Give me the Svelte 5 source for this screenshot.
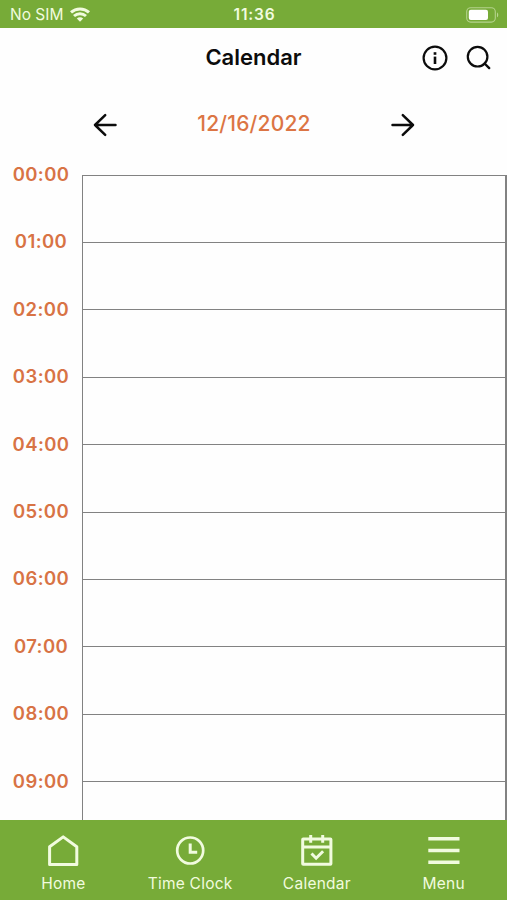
<script lang="ts">
	const date = '12/16/2022';
	const hours = Array.from({ length: 10 }, (_, i) => `${String(i).padStart(2, '0')}:00`);
</script>

<div class="screen">
	<div class="status-bar">
		<div class="carrier">
			<span class="carrier-name">No SIM</span>
			<svg class="wifi" width="20" height="15" viewBox="0 0 20 15" fill="none" stroke="currentColor" stroke-width="3">
				<path d="M1 5.4C6 .8 14 .8 19 5.4" />
				<path d="M4 9c3.500-3.100 8.500-3.100 12 0" />
				<path d="M6.800 11.600c1.900-1.700 4.500-1.700 6.400 0L10 14.800Z" fill="currentColor" stroke="none" />
			</svg>
		</div>
		<span class="clock">11:36</span>
		<svg class="battery" width="33" height="16" viewBox="0 0 33 16">
			<rect x=".7" y=".7" width="28.6" height="14.4" rx="4" fill="none" stroke="currentColor" stroke-opacity=".5" stroke-width="1.1" />
			<rect x="2.8" y="2.7" width="19.2" height="10.4" rx="2" fill="#fff" />
			<path d="M31 5.5c1.6.6 1.6 4.2 0 4.8Z" fill="currentColor" fill-opacity=".55" />
		</svg>
	</div>

	<header class="header">
		<span></span>
		<h1>Calendar</h1>
		<div class="actions">
			<button type="button" aria-label="Info">
				<svg width="26" height="26" viewBox="0 0 26 26" fill="none" stroke="currentColor" stroke-width="2.2">
					<circle cx="13" cy="13" r="11.4" />
					<path d="M13 11.6v7.4" stroke-width="2.6" />
					<path d="M13 7.2v2.6" stroke-width="2.7" />
				</svg>
			</button>
			<button type="button" aria-label="Search">
				<svg width="26" height="26" viewBox="0 0 26 26" fill="none" stroke="currentColor" stroke-width="2.2" stroke-linecap="round">
					<circle cx="11.6" cy="11.7" r="9.8" />
					<path d="m18.6 18.5 4.6 4.6" stroke-width="2.4" />
				</svg>
			</button>
		</div>
	</header>

	<div class="date-nav">
		<button type="button" aria-label="Previous day">
			<svg width="24" height="24" viewBox="0 0 24 24" fill="none" stroke="currentColor" stroke-width="2.5" stroke-linecap="round" stroke-linejoin="round">
				<path d="M22.5 12H2M12.200 2.200 2 12l10.200 9.800" />
			</svg>
		</button>
		<span class="date">{date}</span>
		<button type="button" aria-label="Next day">
			<svg width="24" height="24" viewBox="0 0 24 24" fill="none" stroke="currentColor" stroke-width="2.5" stroke-linecap="round" stroke-linejoin="round">
				<path d="M1.500 12H22M11.800 2.200 22 12l-10.200 9.800" />
			</svg>
		</button>
	</div>

	<main class="day">
		{#each hours as hour}
			<div class="row">
				<span class="hour">{hour}</span>
				<div class="slot"></div>
			</div>
		{/each}
	</main>

	<nav class="tabs">
		<a href="#home">
			<svg width="34" height="34" viewBox="0 0 34 34" fill="none" stroke="currentColor" stroke-width="3">
				<path d="M3.600 30.500V12.700L17.200 2.900l13.600 9.800v17.800Z" stroke-linejoin="round" />
			</svg>
			<span>Home</span>
		</a>
		<a href="#time-clock">
			<svg width="34" height="34" viewBox="0 0 34 34" fill="none" stroke="currentColor" stroke-width="2.7">
				<circle cx="17.2" cy="16.5" r="13" />
				<path d="M17.200 9.500v8.700h7" stroke-width="3" />
			</svg>
			<span>Time Clock</span>
		</a>
		<a href="#calendar">
			<svg width="34" height="34" viewBox="0 0 34 34" fill="none" stroke="currentColor" stroke-width="3">
				<rect x="2.700" y="5" width="28.200" height="25.300" rx=".5" />
				<path d="M2.700 13h28.200M10.700 1v7.800M22.700 1v7.800" />
				<path d="m11.500 19.500 4.600 4.700 7-6.900" />
			</svg>
			<span>Calendar</span>
		</a>
		<a href="#menu">
			<svg width="34" height="34" viewBox="0 0 34 34" fill="none" stroke="currentColor" stroke-width="3.4">
				<path d="M1.300 4.700h31.200M1.300 16.500h31.200M1.300 28.200h31.200" />
			</svg>
			<span>Menu</span>
		</a>
	</nav>
</div>

<style>
	:global(body) {
		margin: 0;
		background: #fff;
	}

	.screen {
		display: flex;
		flex-direction: column;
		width: 507px;
		height: 900px;
		overflow: hidden;
		font-family: Inter, 'Liberation Sans', sans-serif;
		color: #0c0c0c;
		background: #fefefe;
	}

	.status-bar {
		display: grid;
		grid-template-columns: 1fr auto 1fr;
		align-items: center;
		flex: none;
		height: 28px;
		padding: 0 8px 0 10px;
		box-sizing: border-box;
		background: #77ab38;
		color: #f1fbdf;
	}

	.carrier {
		display: flex;
		align-items: center;
		gap: 7px;
	}

	.carrier-name {
		padding-top: 1px;
		font-size: 15.5px;
		line-height: 28px;
	}

	.clock {
		padding-top: 1px;
		font-size: 15.5px;
		font-weight: 600;
		line-height: 28px;
		letter-spacing: 0.8px;
	}

	.battery {
		justify-self: end;
	}

	.header {
		display: grid;
		grid-template-columns: 1fr auto 1fr;
		align-items: center;
		flex: none;
		height: 60px;
		padding: 0 15px;
		box-sizing: border-box;
	}

	h1 {
		margin: -2px 0 0;
		font-size: 22px;
		font-weight: 600;
		line-height: 28px;
	}

	.actions {
		display: flex;
		justify-content: flex-end;
		gap: 18px;
	}

	button {
		display: flex;
		padding: 0;
		border: 0;
		background: none;
		color: inherit;
		cursor: pointer;
	}

	.date-nav {
		display: flex;
		align-items: center;
		justify-content: space-between;
		flex: none;
		height: 74px;
		padding: 0 92px 0 93px;
		box-sizing: border-box;
	}

	.date {
		margin-top: -2px;
		font-size: 21px;
		font-weight: 500;
		line-height: 26px;
		letter-spacing: 0.2px;
		color: #dc7544;
	}

	.day {
		flex: 1;
		min-height: 0;
		overflow: hidden;
		padding-top: 12.7px;
	}

	.row {
		display: flex;
		height: 67.4px;
	}

	.hour {
		width: 82px;
		flex: none;
		margin-top: -12.6px;
		font-size: 18.5px;
		font-weight: 600;
		line-height: 24px;
		letter-spacing: 0.4px;
		text-align: center;
		color: #d87345;
	}

	.slot {
		flex: 1;
		border: solid #828282;
		border-width: 1px 2px 0 1px;
	}

	.tabs {
		display: grid;
		grid-template-columns: repeat(4, 1fr);
		flex: none;
		height: 80px;
		background: #77ab38;
	}

	.tabs a {
		display: flex;
		flex-direction: column;
		align-items: center;
		padding-top: 14px;
		color: #f1fbdf;
		text-decoration: none;
	}

	.tabs span {
		margin-top: 6px;
		font-size: 15.5px;
		line-height: 20px;
		letter-spacing: 0.25px;
	}
</style>
